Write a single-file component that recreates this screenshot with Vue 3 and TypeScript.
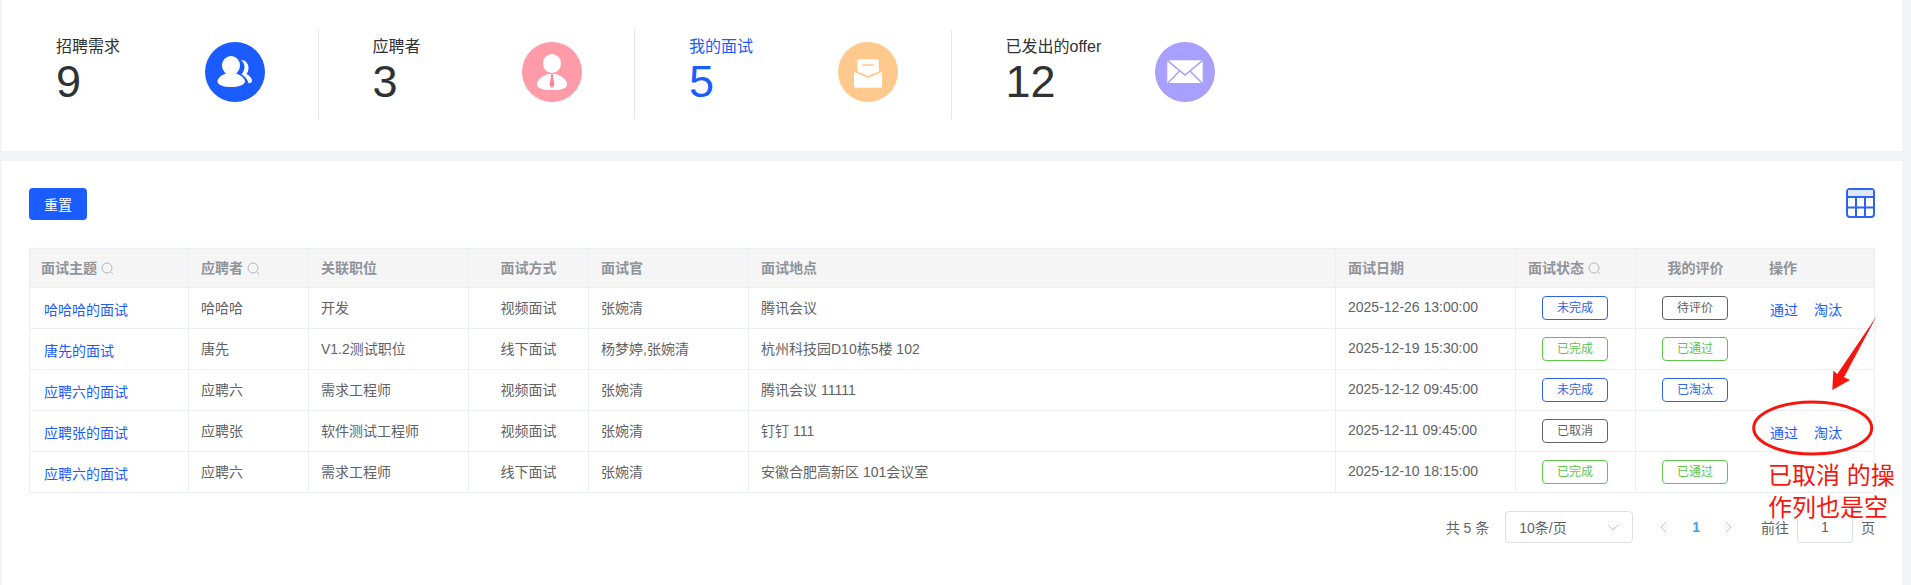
<script setup lang="ts">
type Tag = { text: string; tone: 'blue' | 'grey' | 'green' } | null
interface Row {
  subject: string
  person: string
  job: string
  mode: string
  officer: string
  place: string
  date: string
  status: Tag
  review: Tag
  actions: boolean
}

const headers = [
  { label: '面试主题', search: true, cls: 'first' },
  { label: '应聘者', search: true },
  { label: '关联职位' },
  { label: '面试方式', cls: 'center' },
  { label: '面试官' },
  { label: '面试地点' },
  { label: '面试日期' },
  { label: '面试状态', search: true },
  { label: '我的评价', cls: 'center' },
  { label: '操作', cls: 'ops-head' }
]

const widths = [159, 120, 160, 120, 160, 587, 180, 120, 120, 119]

const rows: Row[] = [
  { subject: '哈哈哈的面试', person: '哈哈哈', job: '开发', mode: '视频面试', officer: '张婉清', place: '腾讯会议', date: '2025-12-26 13:00:00', status: { text: '未完成', tone: 'blue' }, review: { text: '待评价', tone: 'grey' }, actions: true },
  { subject: '唐先的面试', person: '唐先', job: 'V1.2测试职位', mode: '线下面试', officer: '杨梦婷,张婉清', place: '杭州科技园D10栋5楼 102', date: '2025-12-19 15:30:00', status: { text: '已完成', tone: 'green' }, review: { text: '已通过', tone: 'green' }, actions: false },
  { subject: '应聘六的面试', person: '应聘六', job: '需求工程师', mode: '视频面试', officer: '张婉清', place: '腾讯会议 11111', date: '2025-12-12 09:45:00', status: { text: '未完成', tone: 'blue' }, review: { text: '已淘汰', tone: 'blue' }, actions: false },
  { subject: '应聘张的面试', person: '应聘张', job: '软件测试工程师', mode: '视频面试', officer: '张婉清', place: '钉钉 111', date: '2025-12-11 09:45:00', status: { text: '已取消', tone: 'grey' }, review: null, actions: true },
  { subject: '应聘六的面试', person: '应聘六', job: '需求工程师', mode: '线下面试', officer: '张婉清', place: '安徽合肥高新区 101会议室', date: '2025-12-10 18:15:00', status: { text: '已完成', tone: 'green' }, review: { text: '已通过', tone: 'green' }, actions: false }
]
</script>

<template>
  <div class="page">
    <section class="stats">
      <div class="stat">
        <div class="stat-text">
          <div class="stat-title">招聘需求</div>
          <div class="stat-num">9</div>
        </div>
        <svg class="circle" viewBox="0 0 60 60" width="60" height="60">
          <circle cx="30" cy="30" r="30" fill="#1a5cff" />
          <ellipse cx="26" cy="23.5" rx="9" ry="9.5" fill="#fff" />
          <path d="M12.5 39.5c0-4 5.5-7 9-8.5 2.5 1.5 6.5 1.5 9 0 3.5 1.5 9.5 4.5 9.5 8.5 0 3.5-6.5 5.5-14 5.5s-13.5-2-13.5-5.500z" fill="#fff" />
          <path d="M36 18c4.500 0 7.500 3.500 7.500 8 0 2.500-.7 4.500-2 6 3 1.500 5.500 4 5.500 6.800 0 1.700-1.500 2.700-3.500 2.500-1-3.800-3.500-7-7-9 1.800-2 3-4.700 3-7.500 0-2.500-1.200-5-3.500-6.800z" fill="#fff" />
        </svg>
      </div>
      <div class="stat">
        <div class="stat-text">
          <div class="stat-title">应聘者</div>
          <div class="stat-num">3</div>
        </div>
        <svg class="circle" viewBox="0 0 60 60" width="60" height="60">
          <circle cx="30" cy="30" r="30" fill="#ff9aa8" />
          <ellipse cx="30" cy="21.5" rx="9" ry="9.5" fill="#fff" />
          <path d="M15 42c0-4.500 6-8.500 11.500-10h7c5.500 1.500 11.500 5.500 11.500 10 0 4-4 6-15 6s-15-2-15-6z" fill="#fff" />
          <path d="M28.500 32.500h3l-.5 2.500 1.500 8-2.500 3-2.500-3 1.500-8z" fill="#ff8494" />
        </svg>
      </div>
      <div class="stat">
        <div class="stat-text">
          <div class="stat-title active">我的面试</div>
          <div class="stat-num active">5</div>
        </div>
        <svg class="circle" viewBox="0 0 60 60" width="60" height="60">
          <circle cx="30" cy="30" r="30" fill="#ffc98d" />
          <path d="M19.3 19a1.700 1.700 0 0 1 1.700-1.700h18a1.700 1.700 0 0 1 1.700 1.700v10.500L30 34l-10.700-4.500z" fill="#fff" />
          <rect x="24.3" y="22.3" width="11.7" height="1.5" fill="#ffc98d" />
          <path d="M16 30l14 6 14-6v14a1.700 1.700 0 0 1-1.700 1.700H17.700A1.700 1.700 0 0 1 16 44z" fill="#fff" />
        </svg>
      </div>
      <div class="stat last">
        <div class="stat-text">
          <div class="stat-title">已发出的offer</div>
          <div class="stat-num">12</div>
        </div>
        <svg class="circle" viewBox="0 0 60 60" width="60" height="60">
          <circle cx="30" cy="30" r="30" fill="#a99fff" />
          <rect x="12.3" y="18.3" width="35.4" height="22.7" fill="#fff" />
          <path d="M12.3 18.3L30 33l17.700-14.700M13 41l11.500-12M47 41L35 29" fill="none" stroke="#a99fff" stroke-width="1.5" />
        </svg>
      </div>
    </section>

    <section class="panel">
      <div class="toolbar">
        <button class="reset" type="button">重置</button>
        <svg class="grid-icon" viewBox="0 0 29 30" width="29" height="30">
          <rect x="1" y="1" width="27" height="28" rx="3" fill="#fff" stroke="#2d63f5" stroke-width="2" />
          <rect x="2" y="2" width="25" height="6.5" fill="#dde6fb" />
          <path d="M1 9h27M1 19.5h27M10 9v20M19 9v20" fill="none" stroke="#2d63f5" stroke-width="2" />
        </svg>
      </div>

      <table class="table">
        <colgroup>
          <col v-for="(w, i) in widths" :key="i" :style="{ width: w + 'px' }" />
        </colgroup>
        <thead>
          <tr>
            <th v-for="h in headers" :key="h.label" :class="h.cls">
              {{ h.label }}
              <svg v-if="h.search" class="search" viewBox="0 0 13 13" width="13" height="13">
                <circle cx="6" cy="6" r="5" fill="none" stroke="#b4b7bd" stroke-width="1" />
                <path d="M9.5 9.5l2.500 2.500" stroke="#b4b7bd" stroke-width="1" />
              </svg>
            </th>
          </tr>
        </thead>
        <tbody>
          <tr v-for="(r, i) in rows" :key="i">
            <td class="first"><a class="link">{{ r.subject }}</a></td>
            <td>{{ r.person }}</td>
            <td>{{ r.job }}</td>
            <td class="center">{{ r.mode }}</td>
            <td>{{ r.officer }}</td>
            <td>{{ r.place }}</td>
            <td>{{ r.date }}</td>
            <td class="center tag-cell"><span v-if="r.status" class="tag" :class="r.status.tone">{{ r.status.text }}</span></td>
            <td class="center tag-cell"><span v-if="r.review" class="tag" :class="r.review.tone">{{ r.review.text }}</span></td>
            <td class="ops">
              <template v-if="r.actions">
                <a class="link op">通过</a>
                <a class="link op">淘汰</a>
              </template>
            </td>
          </tr>
        </tbody>
      </table>

      <div class="pager">
        <span class="total">共 5 条</span>
        <div class="select">
          <span>10条/页</span>
          <svg viewBox="0 0 12 7" width="12" height="7"><path d="M1 1l5 5 5-5" fill="none" stroke="#c0c4cc" stroke-width="1" /></svg>
        </div>
        <div class="pages">
          <svg viewBox="0 0 7 12" width="7" height="12"><path d="M6 1L1 6l5 5" fill="none" stroke="#c0c4cc" stroke-width="1" /></svg>
          <span class="current">1</span>
          <svg viewBox="0 0 7 12" width="7" height="12"><path d="M1 1l5 5-5 5" fill="none" stroke="#c0c4cc" stroke-width="1" /></svg>
        </div>
        <span class="goto">前往</span>
        <div class="jump">1</div>
        <span>页</span>
      </div>
    </section>

    <svg class="marks" viewBox="0 0 1911 585" width="1911" height="585">
      <path d="M1876.7 316L1844 377.3l6 2.700-17.700 10 1-19.300 4 3.300z" fill="#f5170d" />
      <ellipse cx="1812.7" cy="428" rx="59" ry="26" fill="none" stroke="#f5170d" stroke-width="3" />
    </svg>
    <div class="note">已取消 的操<br />作列也是空</div>
  </div>
</template>

<style>
html,
body {
  margin: 0;
  background: #f2f3f5;
}
</style>

<style scoped>
.page {
  position: relative;
  width: 1911px;
  height: 585px;
  box-sizing: border-box;
  padding: 0 9px 0 2px;
  overflow: hidden;
  background: #f2f3f5;
  font-family: "Liberation Sans", "Noto Sans CJK SC", sans-serif;
  font-size: 14px;
  color: #606266;
}

.stats {
  display: flex;
  height: 151px;
  box-sizing: border-box;
  padding-top: 30px;
  margin-bottom: 10px;
  background: #fff;
}

.stat {
  display: flex;
  box-sizing: border-box;
  width: 316.5px;
  height: 89px;
  padding: 12px 0 0 54px;
  border-right: 1px solid #e4e6ea;
}

.stat.last {
  border-right: none;
}

.stat-text {
  width: 149px;
}

.stat-title {
  margin-top: -5px;
  font-size: 16px;
  line-height: 20px;
  color: #303133;
}

.stat-num {
  font-size: 45px;
  line-height: 46px;
  margin-top: 2px;
  color: #303133;
}

.stat-title.active,
.stat-num.active {
  color: #1a5cff;
}

.circle {
  display: block;
  flex: none;
}

.panel {
  height: 424px;
  box-sizing: border-box;
  padding: 27px 27px 0;
  background: #fff;
}

.toolbar {
  display: flex;
  align-items: flex-start;
  justify-content: space-between;
  height: 60px;
}

.reset {
  width: 58px;
  height: 32px;
  padding: 0;
  border: none;
  border-radius: 4px;
  background: #1a5cff;
  color: #fff;
  font: inherit;
}

.grid-icon {
  display: block;
}

.table {
  width: 1846px;
  table-layout: fixed;
  border-collapse: separate;
  border-spacing: 0;
  border-top: 1px solid #ebeef5;
  border-left: 1px solid #ebeef5;
}

th,
td {
  box-sizing: border-box;
  padding: 0 12px 2px;
  border-right: 1px solid #ebeef5;
  border-bottom: 1px solid #ebeef5;
  text-align: left;
  white-space: nowrap;
}

th.first,
td.first {
  padding-left: 11px;
}

th {
  height: 39px;
  background: #f5f5f5;
  color: #909399;
  font-weight: 700;
}

td {
  height: 41px;
}

th:nth-child(9),
td:nth-child(9) {
  border-right-color: transparent;
}

td.tag-cell {
  padding: 0 13px 0 12px;
}

th.center,
td.center {
  text-align: center;
}

th.ops-head {
  padding-left: 13px;
}

.search {
  vertical-align: -2px;
}

.link {
  display: inline-block;
  padding: 4px 0 0 3px;
  color: #1a5cff;
}

.link.op {
  padding-left: 2px;
  margin-right: 14px;
}

.tag {
  display: inline-block;
  box-sizing: border-box;
  width: 66px;
  height: 24px;
  border: 1px solid;
  border-radius: 4px;
  font-size: 12px;
  line-height: 22px;
  text-align: center;
  vertical-align: middle;
}

.tag.blue {
  color: #2f62ea;
  border-color: #2f62ea;
}

.tag.grey {
  color: #606266;
  border-color: #606266;
}

.tag.green {
  color: #5fc44a;
  border-color: #5fc44a;
}

.pager {
  display: flex;
  align-items: center;
  justify-content: flex-end;
  width: 1846px;
  height: 32px;
  margin-top: 18px;
}

.total {
  margin-right: 16px;
}

.select {
  display: flex;
  align-items: center;
  justify-content: space-between;
  box-sizing: border-box;
  width: 128px;
  height: 32px;
  padding: 0 13px;
  border: 1px solid #dcdfe6;
  border-radius: 4px;
}

.pages {
  display: flex;
  align-items: center;
  gap: 25px;
  margin: 0 29px 0 27px;
}

.current {
  color: #409eff;
  font-weight: 700;
}

.jump {
  box-sizing: border-box;
  width: 56px;
  height: 32px;
  margin: 0 8px;
  border: 1px solid #dcdfe6;
  border-top-color: transparent;
  border-radius: 4px;
  line-height: 30px;
  text-align: center;
}

.marks {
  position: absolute;
  top: 0;
  left: 0;
  pointer-events: none;
}

.note {
  position: absolute;
  top: 460px;
  left: 1768px;
  font-size: 24px;
  line-height: 31.5px;
  color: #f5170d;
  white-space: nowrap;
}
</style>
